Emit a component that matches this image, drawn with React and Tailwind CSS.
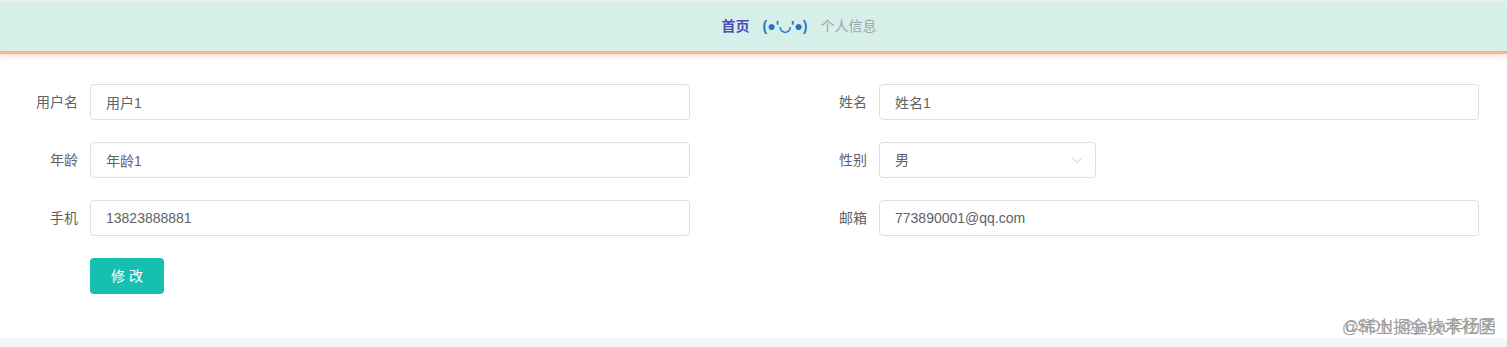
const font = { fontFamily: '"Liberation Sans", "Noto Sans CJK SC", sans-serif' };

const FormItem = ({ label, children }) => (
    <div className="flex items-center">
        <label className="w-[80px] shrink-0 pr-[12px] text-right text-[14px] leading-[36px] text-[#606266]">{label}</label>
        {children}
    </div>
);

const TextInput = ({ value }) => (
    <input
        type="text"
        defaultValue={value}
        className="h-[36px] w-[600px] rounded-[4px] border border-[#dcdfe6] bg-white px-[15px] text-[14px] text-[#606266] outline-none"
    />
);

const SelectBox = ({ value }) => (
    <div className="flex h-[36px] w-[217px] items-center justify-between rounded-[4px] border border-[#dcdfe6] bg-white pl-[15px] pr-[12px] text-[14px] text-[#606266]">
        <span>{value}</span>
        <svg width="12" height="8" viewBox="0 0 12 8" fill="none">
            <path d="M1 1.5 L6 6.5 L11 1.5" stroke="#c0c4cc" strokeWidth="1" />
        </svg>
    </div>
);

const App = () => {
    return (
        <div className="relative h-[347px] w-full overflow-hidden bg-white" style={font}>
            <div className="h-[2px] bg-[#eceff2]" />
            <nav className="flex h-[52px] items-center justify-center border-b-[3px] border-[#f7b196] bg-[#d7efe9] pl-[91px] text-[14px] shadow-[0_3px_6px_rgba(250,190,170,0.45)]">
                <span className="font-bold text-[#4a4db6]">首页</span>
                <span className="mx-[13px] font-bold text-[#1f76c9]">(●'◡'●)</span>
                <span className="text-[#9aa5ab]">个人信息</span>
            </nav>

            <form className="grid grid-cols-[789px_680px] gap-y-[22px] pl-[10px] pt-[30px]">
                <FormItem label="用户名"><TextInput value="用户1" /></FormItem>
                <FormItem label="姓名"><TextInput value="姓名1" /></FormItem>
                <FormItem label="年龄"><TextInput value="年龄1" /></FormItem>
                <FormItem label="性别"><SelectBox value="男" /></FormItem>
                <FormItem label="手机"><TextInput value="13823888881" /></FormItem>
                <FormItem label="邮箱"><TextInput value="773890001@qq.com" /></FormItem>
                <div className="flex">
                    <div className="w-[80px]" />
                    <button type="button" className="h-[36px] w-[74px] rounded-[4px] bg-[#17bfb0] text-[14px] text-white">
                        修 改
                    </button>
                </div>
            </form>

            <div className="absolute bottom-0 left-0 h-[9px] w-full bg-[#f3f5f7]" />

            <div className="absolute bottom-[11px] right-[10px] text-[17px] leading-[18px] text-[#8a8a8a] opacity-80">
                <span className="block whitespace-nowrap text-right">CSDN @java李杨勇</span>
                <span className="absolute right-[2px] top-[1px] whitespace-nowrap">@稀土掘金技术社区</span>
            </div>
        </div>
    );
};

export default App;
